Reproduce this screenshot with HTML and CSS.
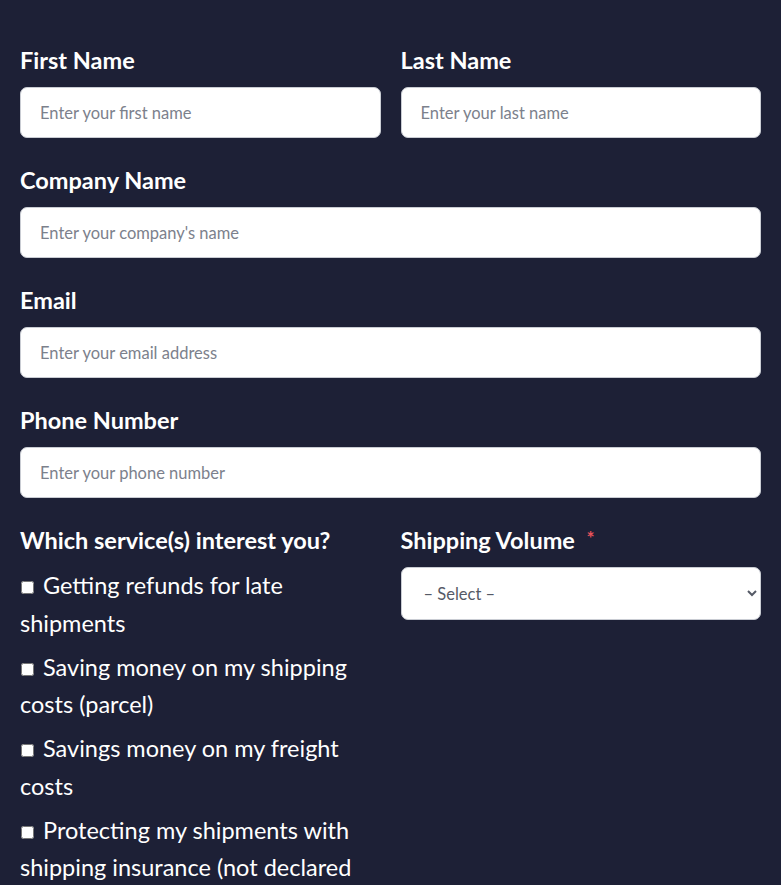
FILE: index.html
```html
<!DOCTYPE html>
<html lang="en">
<head>
<meta charset="utf-8">
<title>Contact form</title>
<link rel="stylesheet" href="styles.css">
</head>
<body>
<form class="form">
  <div class="row two">
    <div class="field">
      <label class="label" for="fn">First Name</label>
      <input class="input" id="fn" type="text" placeholder="Enter your first name">
    </div>
    <div class="field">
      <label class="label" for="ln">Last Name</label>
      <input class="input" id="ln" type="text" placeholder="Enter your last name">
    </div>
  </div>
  <div class="field">
    <label class="label" for="cn">Company Name</label>
    <input class="input" id="cn" type="text" placeholder="Enter your company's name">
  </div>
  <div class="field">
    <label class="label" for="em">Email</label>
    <input class="input" id="em" type="email" placeholder="Enter your email address">
  </div>
  <div class="field">
    <label class="label" for="ph">Phone Number</label>
    <input class="input" id="ph" type="tel" placeholder="Enter your phone number">
  </div>
  <div class="row two">
    <div class="field">
      <div class="label">Which service(s) interest you?</div>
      <ul class="checks">
        <li class="check"><label><input type="checkbox" class="box"> Getting refunds for late shipments</label></li>
        <li class="check"><label><input type="checkbox" class="box"> Saving money on my shipping costs (parcel)</label></li>
        <li class="check"><label><input type="checkbox" class="box"> Savings money on my freight costs</label></li>
        <li class="check"><label><input type="checkbox" class="box"> Protecting my shipments with shipping insurance (not declared value)</label></li>
      </ul>
    </div>
    <div class="field">
      <label class="label" for="sv">Shipping Volume <span class="req">*</span></label>
      <select class="select" id="sv">
        <option>&ndash; Select &ndash;</option>
        <option>Under 100 / month</option>
        <option>100 – 1,000 / month</option>
      </select>
    </div>
  </div>
</form>
</body>
</html>
```
FILE: styles.css
```css
html, body {
  margin: 0;
  padding: 0;
  background: #1d2036;
}
body {
  font-family: Lato, "Noto Sans", sans-serif;
  color: #ffffff;
}
.form {
  padding: 44px 20px 0 20px;
}
.row.two {
  display: grid;
  grid-template-columns: 1fr 1fr;
  column-gap: 20px;
}
.field {
  display: flex;
  flex-direction: column;
  margin-bottom: 26px;
}
.label {
  font-size: 23.5px;
  font-weight: 700;
  line-height: 33px;
  margin-bottom: 10px;
}
.req {
  color: #e8525a;
  font-size: 19px;
  font-weight: 700;
  vertical-align: top;
  line-height: 28px;
  margin-left: 6px;
}
.input {
  box-sizing: border-box;
  height: 51px;
  width: 100%;
  border: 1px solid #c9ccd3;
  border-radius: 7px;
  background: #ffffff;
  padding: 0 19px;
  font-family: inherit;
  font-size: 16.5px;
  color: #333;
  outline: none;
}
.input::placeholder {
  color: #7c818c;
}
.select {
  box-sizing: border-box;
  height: 53px;
  width: 100%;
  border: 1px solid #c9ccd3;
  border-radius: 7px;
  background: #ffffff;
  padding: 0 18px;
  font-family: inherit;
  font-size: 16.5px;
  color: #555a66;
}
.checks {
  list-style: none;
  margin: 0;
  padding: 0;
}
.check {
  font-size: 23.5px;
  line-height: 37.5px;
  margin-bottom: 6.5px;
}
.box {
  width: 13px;
  height: 13px;
  margin: 0 3px 0 1px;
}
```
